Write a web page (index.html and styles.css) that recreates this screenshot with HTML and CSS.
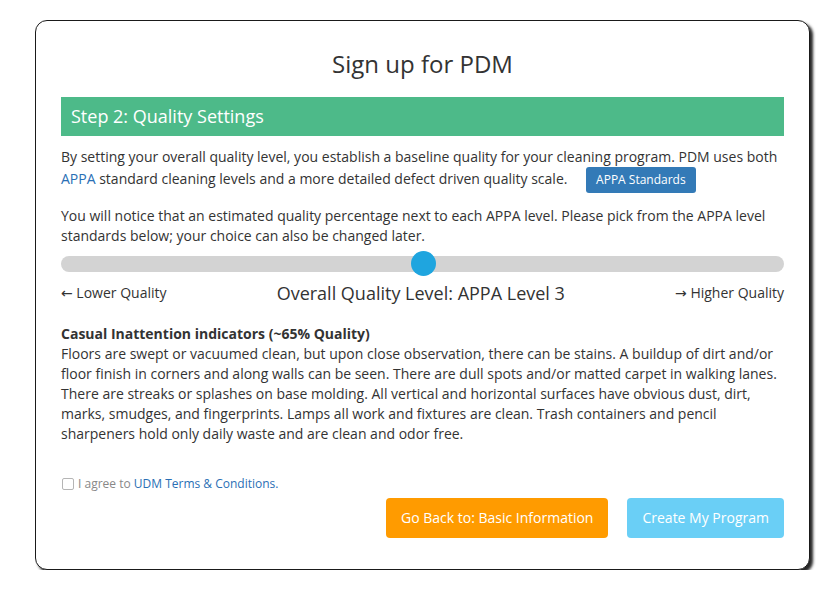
FILE: index.html
```html
<!DOCTYPE html>
<html>
<head>
<meta charset="utf-8">
<link rel="stylesheet" href="styles.css">
</head>
<body>
<div class="card">
  <h1 class="title">Sign up for PDM</h1>
  <div class="step">Step 2: Quality Settings</div>
  <p class="para p1">By setting your overall quality level, you establish a baseline quality for your cleaning program. PDM uses both <a class="link" href="#">APPA</a> standard cleaning levels and a more detailed defect driven quality scale. <span class="btn-appa">APPA Standards</span></p>
  <p class="para p2">You will notice that an estimated quality percentage next to each APPA level. Please pick from the APPA level standards below; your choice can also be changed later.</p>
  <div class="slider">
    <div class="track"></div>
    <div class="thumb"></div>
  </div>
  <div class="labels">
    <span class="lbl"><span class="arrow">←</span> Lower Quality</span>
    <span class="level">Overall Quality Level: APPA Level 3</span>
    <span class="lbl"><span class="arrow">→</span> Higher Quality</span>
  </div>
  <div class="desc">
    <div class="desc-title">Casual Inattention indicators (~65% Quality)</div>
    <div class="desc-text">Floors are swept or vacuumed clean, but upon close observation, there can be stains. A buildup of dirt and/or floor finish in corners and along walls can be seen. There are dull spots and/or matted carpet in walking lanes. There are streaks or splashes on base molding. All vertical and horizontal surfaces have obvious dust, dirt, marks, smudges, and fingerprints. Lamps all work and fixtures are clean. Trash containers and pencil sharpeners hold only daily waste and are clean and odor free.</div>
  </div>
  <label class="agree"><input type="checkbox" class="check"><span>I agree to <a class="link" href="#">UDM Terms &amp; Conditions.</a></span></label>
  <div class="actions">
    <span class="btn btn-back">Go Back to: Basic Information</span>
    <span class="btn btn-create">Create My Program</span>
  </div>
</div>
</body>
</html>
```

FILE: styles.css
```css
* { box-sizing: border-box; }
html, body { margin: 0; padding: 0; background: #fff; }
body {
  font-family: "Open Sans", "Liberation Sans", sans-serif;
  font-size: 14px;
  line-height: 20px;
  color: #333;
}
.card {
  margin: 20px 0 0 35px;
  width: 775px;
  border: 1px solid #1a1a1a;
  border-radius: 12px;
  box-shadow: 3px 3px 3px rgba(0,0,0,0.85);
  padding: 30px 25px 31px;
  background: #fff;
}
.title {
  margin: 0 0 20px;
  font-size: 24px;
  font-weight: 400;
  line-height: 26px;
  text-align: center;
  color: #333;
}
.step {
  background: #4dba89;
  color: #fff;
  font-size: 18px;
  height: 39px;
  line-height: 39px;
  padding: 0 10px;
}
.para { margin: 0; }
.p1 { margin-top: 11px; }
.p2 { margin-top: 13px; }
.link { color: #2a6fb5; text-decoration: none; }
.btn-appa {
  display: inline-block;
  vertical-align: middle;
  margin-left: 15px;
  background: #337ab7;
  color: #fff;
  font-size: 12px;
  line-height: 16px;
  padding: 5px 10px;
  border-radius: 3px;
}
.slider {
  position: relative;
  margin-top: 10px;
  height: 16px;
}
.track {
  height: 16px;
  border-radius: 8px;
  background: #d3d3d3;
}
.thumb {
  position: absolute;
  left: 350px;
  top: -5px;
  width: 25px;
  height: 25px;
  border-radius: 50%;
  background: #1fa5df;
}
.labels {
  display: flex;
  justify-content: space-between;
  align-items: center;
  margin-top: 9px;
  height: 24px;
}
.arrow { font-family: "DejaVu Sans", sans-serif; font-size: 14px; }
.level { font-size: 18px; }
.desc { margin-top: 19px; }
.desc-title { font-weight: 700; }
.agree {
  display: flex;
  align-items: center;
  margin-top: 30px;
  font-size: 12px;
  color: #888;
  line-height: 20px;
}
.check {
  appearance: none;
  -webkit-appearance: none;
  margin: 0 4px 0 1px;
  width: 12px;
  height: 12px;
  border: 1px solid #b5b5b5;
  border-radius: 2px;
  background: #fff;
}
.actions {
  display: flex;
  justify-content: flex-end;
  gap: 19px;
  margin-top: 4px;
}
.btn {
  display: inline-block;
  height: 40px;
  line-height: 40px;
  padding: 0 15px;
  border-radius: 4px;
  color: #fff;
  font-size: 14px;
}
.btn-back { background: #ff9b00; }
.btn-create { background: #6acff6; }
```
